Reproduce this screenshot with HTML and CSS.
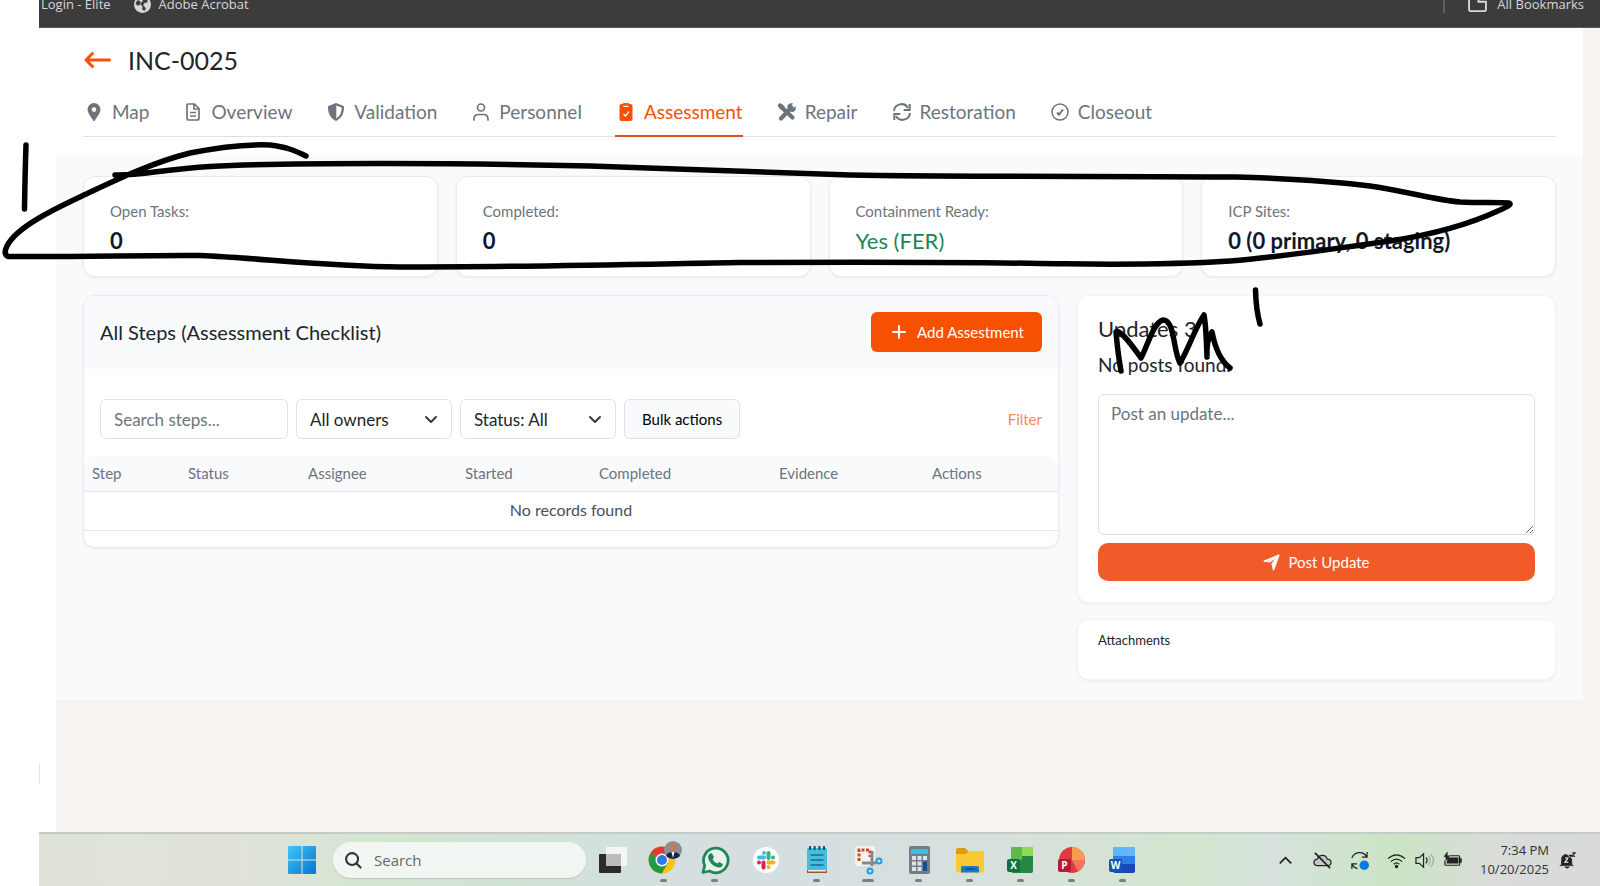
FILE: index.html
```html
<!DOCTYPE html>
<html lang="en">
<head>
<meta charset="utf-8">
<title>INC-0025 Assessment</title>
<link rel="stylesheet" href="styles.css">
</head>
<body>
<header class="bookmarks">
  <a class="bookmark" href="#">Login - Elite</a>
  <a class="bookmark" href="#">
    <svg class="globe" viewBox="0 0 16 16"><circle cx="8" cy="8" r="8" fill="#d5d7da"/><path d="M3 4c2 0 4 1 3 3s-1 2-3 2L1.500 7zM9 2c2 0 3 1 4 3-1 2-3 1-4 3s2 2 2 4-2 2-3 1 1-3-1-4 0-3 1-4z" fill="#3c3c3c"/></svg>
    Adobe Acrobat</a>
  <span class="bookmark-rule"></span>
  <a class="bookmark bookmark-all" href="#">
    <svg class="folder" viewBox="0 0 20 16" fill="none" stroke="#d5d7da" stroke-width="2"><path d="M1 1v12q0 2 2 2h14q2 0 2-2V5h-8V1z"/></svg>
    All Bookmarks</a>
</header>

<div class="workspace">
  <aside class="rail"><span class="rail-handle"></span></aside>
  <main class="page">
    <section class="masthead">
      <div class="title-row">
        <a class="back" href="#" aria-label="Back"><svg viewBox="0 0 28 18" fill="none" stroke="#f65103" stroke-width="3" stroke-linecap="round" stroke-linejoin="round"><path d="M26 9H3M9 2.500 2.500 9 9 15.500"/></svg></a>
        <h1>INC-0025</h1>
      </div>
      <nav class="tabs">
        <a class="tab" href="#"><svg viewBox="0 0 21 18"><path fill="currentColor" fill-rule="evenodd" d="M11 0a6.500 6.500 0 0 1 6.500 6.600C17.500 10 13.500 15 11.900 17.400q-.9 1.200-1.800 0C8.500 15 4.500 10 4.500 6.600A6.500 6.500 0 0 1 11 0zm0 4.300a2.300 2.300 0 1 0 0 4.600 2.300 2.300 0 0 0 0-4.600z"/></svg>Map</a>
        <a class="tab" href="#"><svg viewBox="0 0 21 18" fill="none" stroke="currentColor" stroke-width="1.700" stroke-linejoin="round"><path d="M6 1h6.500L17 5.500V15q0 2-2 2H7q-2 0-2-2V2q0-1 1-1zM12 1v5h5M8 9.500h6M8 13h6"/></svg>Overview</a>
        <a class="tab" href="#"><svg viewBox="0 0 21 18"><path fill="currentColor" fill-rule="evenodd" d="M11 0l7 2.700q1 .4 1 1.500C19 11 16 15.600 11 18 6 15.600 3 11 3 4.200q0-1.100 1-1.500zm.3 2.500v12.900c3.500-2 5.300-5.500 5.400-10.800z"/></svg>Validation</a>
        <a class="tab" href="#"><svg viewBox="0 0 21 18" fill="none" stroke="currentColor" stroke-width="1.700" stroke-linecap="round"><circle cx="11" cy="4.500" r="3.500"/><path d="M4 17v-1q0-4.500 4.500-4.500h5Q18 11.500 18 16v1"/></svg>Personnel</a>
        <a class="tab tab-active" href="#" aria-current="page"><svg viewBox="0 0 21 18"><rect x="4.500" y="1" width="13" height="17" rx="2" fill="currentColor"/><rect x="7.500" y="0" width="7" height="4" rx="1.500" fill="currentColor"/><path d="M8.500 3.300h5M8.500 11l2 2 3.500-4.500" fill="none" stroke="#fff" stroke-width="1.300"/></svg>Assessment</a>
        <a class="tab" href="#"><svg viewBox="0 0 21 18"><path d="M4 2.500l3.500 3.500 9 8.500M15.500 4.500 5 15.500" stroke="currentColor" stroke-width="4.200" stroke-linecap="round" fill="none"/><path d="M19.500 3.200l-3 2.500-2-2L17 .6c-3.500-1.200-6.500 1.500-5.500 5l4 3.400c3 .3 5.200-2.500 4-5.800zM2 3l3-2.500L8.500 3v3l-2 1.500L4 6z" fill="currentColor"/></svg>Repair</a>
        <a class="tab" href="#"><svg viewBox="0 0 21 18" fill="none" stroke="currentColor" stroke-width="2"><path d="M3 8a7.500 7.500 0 0 1 14-3M19 10a7.500 7.500 0 0 1-14 3"/><path d="M18.700 1v6h-6M3.300 17v-6h6"/></svg>Restoration</a>
        <a class="tab" href="#"><svg viewBox="0 0 21 18" fill="none" stroke="currentColor" stroke-width="1.500"><circle cx="11" cy="9" r="8"/><path d="M8 9.500l2 2.200L14 6.500" stroke-width="2"/></svg>Closeout</a>
      </nav>
    </section>

    <section class="content">
      <div class="stat"><span class="stat-label">Open Tasks:</span><strong class="stat-value">0</strong></div>
      <div class="stat"><span class="stat-label">Completed:</span><strong class="stat-value">0</strong></div>
      <div class="stat"><span class="stat-label">Containment Ready:</span><strong class="stat-value stat-ready">Yes (FER)</strong></div>
      <div class="stat"><span class="stat-label">ICP Sites:</span><strong class="stat-value">0 (0 primary, 0 staging)</strong></div>

      <section class="steps">
        <div class="steps-head">
          <h2>All Steps (Assessment Checklist)</h2>
          <button class="add" type="button"><svg viewBox="0 0 14 14" stroke="#fff" stroke-width="2" stroke-linecap="round"><path d="M7 1v12M1 7h12"/></svg>Add Assestment</button>
        </div>
        <form class="filters">
          <input class="field search" type="text" placeholder="Search steps..." aria-label="Search steps">
          <span class="picker"><select class="field" aria-label="Owner"><option>All owners</option></select><svg viewBox="0 0 12 8" fill="none" stroke="#343a40" stroke-width="2" stroke-linecap="round" stroke-linejoin="round"><path d="M1 1l5 5 5-5"/></svg></span>
          <span class="picker"><select class="field" aria-label="Status"><option>Status: All</option></select><svg viewBox="0 0 12 8" fill="none" stroke="#343a40" stroke-width="2" stroke-linecap="round" stroke-linejoin="round"><path d="M1 1l5 5 5-5"/></svg></span>
          <button class="bulk" type="button">Bulk actions</button>
          <a class="filter-link" href="#">Filter</a>
        </form>
        <table class="steps-table">
          <colgroup><col class="c-step"><col class="c-status"><col class="c-assignee"><col class="c-started"><col class="c-completed"><col class="c-evidence"><col></colgroup>
          <thead><tr><th>Step</th><th>Status</th><th>Assignee</th><th>Started</th><th>Completed</th><th>Evidence</th><th>Actions</th></tr></thead>
          <tbody><tr><td colspan="7">No records found</td></tr></tbody>
        </table>
      </section>

      <div class="side">
        <section class="updates">
          <h2>Updates 3</h2>
          <p class="no-posts">No posts found.</p>
          <textarea class="post-text" placeholder="Post an update..." aria-label="Post an update"></textarea>
          <button class="post" type="button"><svg viewBox="0 0 18 18"><path d="M1 6.800 16.500.600q1.200-.3.900.9L12 16.800q-.8 1.200-1.700.1L8.900 10.400 13 5 7.400 9 1 8.100q-1-.7 0-1.300z" fill="#fff"/></svg>Post Update</button>
        </section>
        <section class="attachments"><h3>Attachments</h3></section>
      </div>
    </section>
  </main>
</div>

<footer class="taskbar">
  <div class="apps">
    <button class="app start" type="button" aria-label="Start"><svg viewBox="0 0 27 27"><defs><linearGradient id="win" x1="0" y1="0" x2="1" y2="1" gradientUnits="objectBoundingBox"><stop offset="0" stop-color="#3fc6f7"/><stop offset="1" stop-color="#0874d1"/></linearGradient></defs><path d="M1 0h12v13H0V1q0-1 1-1zM14 0h12q1 0 1 1v12H14zM0 14h13v13H1q-1 0-1-1zM14 14h13v12q0 1-1 1H14z" fill="url(#win)"/></svg></button>
    <label class="search-box">
      <svg viewBox="0 0 18 18" fill="none" stroke="#333" stroke-width="2.200" stroke-linecap="round"><circle cx="7.500" cy="7.500" r="6.300"/><path d="M12.200 12.200l4.300 4.300"/></svg>
      <input type="text" placeholder="Search" aria-label="Search">
    </label>
    <button class="app" type="button" aria-label="Task view"><svg viewBox="0 0 28 28"><rect x="0" y="8" width="22" height="19" rx="1" fill="#2b2b2b"/><rect x="7" y="1" width="21" height="19" rx="1" fill="#f4f5f5"/><rect x="7" y="8" width="15" height="12" fill="#bcbcbc"/></svg></button>
    <button class="app running" type="button" aria-label="Chrome"><svg viewBox="0 0 28 28"><circle cx="12" cy="14" r="13.500" fill="#fbc116"/><path d="M12 14 .3 7.300A13.500 13.500 0 0 1 23.700 7.300z" fill="#e33b2e"/><path d="M12 14 .3 7.300A13.500 13.500 0 0 0 12 27.500L18 17z" fill="#229a48"/><path d="M12 8h11.700a13.500 13.500 0 0 1-11.700 19.500L18 17z" fill="#fbc116"/><circle cx="12" cy="14" r="6.500" fill="#fff"/><circle cx="12" cy="14" r="5" fill="#3376e8"/><circle cx="23" cy="4" r="9" fill="#8b9199"/><path d="M16 10q1-4 7-4t7 4q-3 3-7 3t-7-3z" fill="#172441"/><circle cx="23" cy="1" r="4.200" fill="#b97e64"/><path d="M21.500 6h3L23 12z" fill="#fff"/></svg></button>
    <button class="app running" type="button" aria-label="WhatsApp"><svg viewBox="0 0 28 28"><path d="M2 26.500l1.700-6.800A12.300 12.300 0 1 1 8.500 25z" fill="#eaf2ec" stroke="#21875b" stroke-width="2.800" stroke-linejoin="round"/><path d="M9 7.500l2-.3 2 4-1.400 2q1.500 3 4.700 4.400l1.900-1.700 3.600 2q.1 3-3.500 3.600C13 21.500 7 16 7 10.600Q7.300 8.500 9 7.500z" fill="#21875b"/></svg></button>
    <button class="app" type="button" aria-label="Slack"><svg viewBox="0 0 28 28" stroke-width="4" stroke-linecap="round"><circle cx="14" cy="14" r="13" fill="#fff"/><path d="M7 11.500h5M12 7v0" stroke="#38bfe8"/><path d="M16.500 7v5M21 11.500v0" stroke="#31b57c"/><path d="M16.500 16.500h5M16.500 21v0" stroke="#e8b02d"/><path d="M11.500 16.500v5M7 16.500v0" stroke="#dc1e5b"/></svg></button>
    <button class="app running" type="button" aria-label="Notepad"><svg viewBox="0 0 28 28"><rect x="4" y="2" width="20" height="22" rx="1.500" fill="#43bfdc"/><path d="M4 24h20v3H4z" fill="#a15323"/><path d="M5 24h18v1.500H5z" fill="#f1f1f1"/><path d="M7 0v4M11.700 0v4M16.400 0v4M21 0v4" stroke="#19536c" stroke-width="2"/><path d="M7.500 9h13M7.500 14h13M7.500 19h13" stroke="#176c91" stroke-width="1.500"/></svg></button>
    <button class="app running wide" type="button" aria-label="Snipping Tool"><svg viewBox="0 0 28 28" fill="none"><rect x="1" y="0" width="20" height="20" rx="2" fill="#f5f2ef"/><path d="M5 15V4h11v7" stroke="#cf4a20" stroke-width="3" stroke-dasharray="3 1.500"/><path d="M18 5v15M8 17h14" stroke="#85898d" stroke-width="3"/><circle cx="25" cy="15" r="2.500" stroke="#269cdd" stroke-width="2"/><circle cx="16" cy="25" r="2.500" stroke="#269cdd" stroke-width="2"/></svg></button>
    <button class="app running" type="button" aria-label="Calculator"><svg viewBox="0 0 28 28"><rect x="4" y="0" width="21" height="28" rx="2" fill="#737d86"/><rect x="6" y="3" width="17" height="5" fill="#38bde8"/><path d="M7 10h4v4H7zM12.500 10h4v4h-4zM18 10h4v4h-4zM7 15.500h4v4H7zM12.500 15.500h4v4h-4zM7 21h4v4H7zM12.500 21h4v4h-4z" fill="#dfe3e6"/><path d="M18 15.500h4V25h-4z" fill="#114f91"/></svg></button>
    <button class="app running" type="button" aria-label="File Explorer"><svg viewBox="0 0 28 28"><path d="M0 4q0-2 2-2h7l3 3h14v8H0z" fill="#dc9c12"/><path d="M0 8h10l3-3h15v20q0 1.500-1.500 1.500h-25Q0 26.500 0 25z" fill="#fcc935"/><path d="M5 26.500V22q0-2 2-2h14q2 0 2 2v4.500z" fill="#1978c9"/><path d="M9 23h10" stroke="#0a4f91" stroke-width="1.500"/></svg></button>
    <button class="app running" type="button" aria-label="Excel"><svg viewBox="0 0 28 28"><rect x="4" y="1" width="22" height="26" rx="2" fill="#258842"/><path d="M6 1h9v13H4V3q0-2 2-2z" fill="#5bba48"/><path d="M15 1h9q2 0 2 2v7H15z" fill="#90db51"/><rect x="0" y="13" width="13" height="13" rx="2" fill="#10713c"/><text class="badge" x="6.500" y="23">X</text></svg></button>
    <button class="app running" type="button" aria-label="PowerPoint"><svg viewBox="0 0 28 28"><circle cx="14" cy="14" r="13" fill="#db3e3c"/><path d="M14 1a13 13 0 0 1 13 13H14z" fill="#fb9b50"/><path d="M14 14h13a13 13 0 0 1-7 11.500z" fill="#f27562"/><rect x="0" y="13" width="13" height="13" rx="2" fill="#bb1831"/><text class="badge" x="6.500" y="23">P</text></svg></button>
    <button class="app running" type="button" aria-label="Word"><svg viewBox="0 0 28 28"><rect x="4" y="1" width="22" height="26" rx="2" fill="#1648b9"/><path d="M4 10h22v8H4z" fill="#2c80e5"/><path d="M6 1h18q2 0 2 2v7H4V3q0-2 2-2z" fill="#61b7fa"/><rect x="0" y="13" width="13" height="13" rx="2" fill="#1254b7"/><text class="badge" x="6.500" y="23">W</text></svg></button>
  </div>
  <div class="tray">
    <svg class="tray-icon" viewBox="0 0 20 20"><path d="M4 13l6-6 6 6" stroke-width="1.800"/></svg>
    <svg class="tray-icon" viewBox="0 0 20 20"><path d="M5 15.500q-4-.5-4-3.500 0-3 3.500-3.500Q6 4.500 10 4.500t5 4q4 .3 4 3.500t-4 3.500z" fill="#c6c6c6"/><path d="M2 2l16 16" stroke-width="1.800"/></svg>
    <svg class="tray-icon" viewBox="0 0 20 20"><path d="M2 7.500A8.500 8.500 0 0 1 17.500 6M18 1v5.500h-5.500M2 19v-5.500h5.500M2 13.500q1.500 4 6 5"/><circle cx="15" cy="15" r="5" fill="#0b7bdb" stroke="none"/></svg>
    <span class="status-group">
      <svg class="tray-icon" viewBox="0 0 20 20"><path d="M1 8q9-8 18 0M4 11.200q6-5.500 12 0M7 14q3-2.800 6 0"/><circle cx="10" cy="16.200" r="1.200" fill="#222"/></svg>
      <svg class="tray-icon" viewBox="0 0 20 20"><path d="M1 7v6h3.500L9 17V3L4.500 7zM11.500 7q2.500 3 0 6"/><path d="M14 5q4 5 0 10M16.500 3q6 7 0 14" stroke="#a6aaa5"/></svg>
      <svg class="tray-icon" viewBox="0 0 20 20"><path d="M7 5h9.500q1 0 1 1v8q0 1-1 1H3q-1 0-1-1v-4"/><path d="M5 7h11v6H4zM18 8h1.500v4H18zM4.500 1v4H7L3 10V6H1z" fill="#222" stroke-width=".5"/></svg>
    </span>
    <time class="clock"><span>7:34 PM</span><span>10/20/2025</span></time>
    <svg class="tray-icon bell" viewBox="0 0 20 20"><path d="M3 15V9q0-6 6-6l6 6v6l2 1H1zM7 17.500h5q-2.500 3-5 0z" fill="#222" stroke-width=".8"/><path d="M7 7h4l-4 5h4" stroke="#fff" stroke-width="1.300"/><path d="M11.500 4h3.500l-3.500 4h3.500M15.500 1H19l-3.500 4H19" stroke-width="1.300"/></svg>
  </div>
</footer>

<svg class="ink" viewBox="0 0 1600 886" preserveAspectRatio="none" stroke-width="5.500" aria-hidden="true">
  <path d="M26 145Q25 175 24.500 209"/>
  <path d="M115 175C138 176 165 169 210 166.500C300 162 460 163 590 166C690 169 740 172 850 175C960 177 1130 176 1235 177C1290 178.500 1330 181 1370 186C1410 192 1435 200 1460 202C1480 203 1500 202 1509 203C1512 204 1509 206 1500 210C1470 224 1430 235 1390 241C1330 249 1290 256 1230 261C1150 266 1090 264 1040 263.500C960 262 850 262 740 262.500C650 264 530 267 400 267C320 266 260 258 200 255.500C140 255 90 257 8 256.500Q3 254 7 246C16 228 50 211 82 196C110 183 150 163 190 153C215 148 245 144 270 145C286 147 294 150 306 156"/>
  <path d="M1121 371Q1118 355 1116 332Q1120 328 1141 358C1148 345 1153 323 1163 320C1175 320 1173 351 1180 363C1188 350 1196 326 1204 315Q1206 325 1207 357Q1206 340 1212 332Q1217 358 1230 368"/>
  <path d="M1255.500 290Q1256 310 1260 324"/>
</svg>
</body>
</html>
```
FILE: styles.css
```css
* { box-sizing: border-box; }

body {
  margin: 0;
  min-height: 100vh;
  display: flex;
  flex-direction: column;
  position: relative;
  background: #fff;
  color: #212529;
  font-family: Lato, "Open Sans", sans-serif;
  font-size: 16px;
}

a { color: inherit; text-decoration: none; }
h1, h2, h3, p { margin: 0; font-weight: 400; }
button, input, select, textarea { font: inherit; color: inherit; }
svg { flex: none; overflow: visible; }

/* Browser bookmarks strip */
.bookmarks {
  display: flex;
  align-items: flex-start;
  gap: 23px;
  height: 28px;
  margin-left: 39px;
  padding: 0 16px 0 2px;
  overflow: hidden;
  background: #3c3c3c;
  border-bottom: 1px solid #5a5a5a;
  color: #d5d7da;
  font-family: "Open Sans", sans-serif;
  font-size: 13px;
  line-height: 8px;
}
.bookmark { display: flex; align-items: center; gap: 8px; height: 8px; }
.globe { width: 17px; height: 17px; }
.folder { width: 19px; height: 15px; }
.bookmark-rule { width: 2px; height: 13px; margin-left: auto; background: #5f5f5f; }
.bookmark-all { gap: 10px; }

.workspace { flex: 1; display: flex; background: #f7f3f0; }
.rail { width: 56px; display: flex; flex-direction: column; justify-content: flex-end; padding: 0 0 48px 39px; background: #fff; }
.rail-handle { width: 1px; height: 21px; background: #e6e6e6; }
.page { flex: 1; margin-right: 17px; }

/* Title and tabs */
.masthead { padding: 16px 27px 18px; background: #fff; }
.title-row { display: flex; align-items: center; gap: 16px; height: 32px; }
.back { display: flex; }
.back svg { width: 29px; height: 18px; }
h1 { font-size: 25px; line-height: 32px; }
.tabs { display: flex; gap: 33px; margin-top: 16px; border-bottom: 1px solid #dee2e6; color: #6c757d; font-size: 19px; }
.tab { display: flex; align-items: center; gap: 8px; height: 45px; padding-bottom: 4px; margin-bottom: -1px; border-bottom: 2px solid transparent; }
.tab svg { width: 21px; height: 18px; }
.tab-active { color: #f65103; border-color: #d9531e; }

/* Card grid */
.content {
  display: grid;
  grid-template-columns: repeat(12, minmax(0, 1fr));
  gap: 18px;
  align-items: start;
  padding: 21px 27px 20px;
  background: #f8fafc;
}
.stat, .steps, .updates, .attachments {
  background: #fff;
  border: 1px solid #e9ebee;
  border-radius: 12px;
  box-shadow: 0 1px 3px rgba(0, 0, 0, .06);
}
.stat { grid-column: span 3; display: flex; flex-direction: column; gap: 5px; padding: 24px 26px 20px; }
.stat-label { color: #6c757d; font-size: 15px; line-height: 20px; }
.stat-value { font-size: 22px; font-weight: 700; line-height: 30px; color: #111827; }
.stat-ready { color: #198754; font-weight: 400; }

.steps { grid-column: span 8; padding-bottom: 16px; overflow: hidden; }
.steps-head { display: flex; align-items: center; justify-content: space-between; padding: 16px 16px 17px; background: #f8fafc; }
h2 { font-size: 20px; line-height: 28px; }
.add { display: flex; align-items: center; justify-content: center; gap: 11px; height: 40px; padding: 0 18px 0 21px; border: 0; border-radius: 6px; background: #f65103; color: #fff; font-size: 15px; }
.add svg { width: 14px; height: 14px; }
.filters { display: flex; align-items: center; gap: 8px; padding: 30px 16px 17px; }
.field { width: 100%; height: 40px; padding: 0 13px; border: 1px solid #dee2e6; border-radius: 6px; background: #fff; font-size: 17px; appearance: none; }
.field::placeholder, .post-text::placeholder { color: #6c757d; opacity: 1; }
.search { width: 188px; }
.picker { position: relative; width: 156px; }
.picker svg { position: absolute; right: 15px; top: 17px; width: 12px; height: 8px; pointer-events: none; }
.bulk { height: 40px; padding: 0 17px; border: 1px solid #dee2e6; border-radius: 6px; background: #f8fafc; color: #000; font-size: 15px; }
.filter-link { margin-left: auto; color: #fa8a58; font-size: 15px; }

.steps-table { width: 100%; table-layout: fixed; border-collapse: separate; border-spacing: 0; }
.c-step { width: 96px; }
.c-status { width: 120px; }
.c-assignee { width: 157px; }
.c-started { width: 134px; }
.c-completed { width: 180px; }
.c-evidence { width: 153px; }
th { height: 36px; padding: 0 8px 2px; border-bottom: 1px solid #e5e7eb; background: #f8fafc; color: #6c757d; font-size: 15px; font-weight: 400; text-align: left; }
th:first-child { border-top-left-radius: 12px; }
th:last-child { border-top-right-radius: 12px; }
td { height: 39px; padding: 0 0 3px; border-bottom: 1px solid #e5e7eb; color: #495057; font-size: 16px; text-align: center; }

/* Right column */
.side { grid-column: span 4; display: flex; flex-direction: column; gap: 16px; }
.updates, .attachments { border-color: #f3f5f7; }
.updates { display: flex; flex-direction: column; padding: 17px 20px 21px; }
.updates h2 { font-size: 22px; line-height: 32px; }
.no-posts { margin: 6px 0 15px; font-size: 19px; line-height: 28px; }
.post-text { display: block; width: 100%; height: 141px; margin-bottom: 8px; padding: 7px 12px; border: 1px solid #dee2e6; border-radius: 6px; background: #fff; font-size: 17px; line-height: 24px; resize: vertical; }
.post { display: flex; align-items: center; justify-content: center; gap: 8px; height: 38px; border: 0; border-radius: 10px; background: #f15a29; color: #fff; font-size: 15px; }
.post svg { width: 17px; height: 17px; }
.attachments { height: 61px; padding: 10px 20px; }
h3 { font-size: 13px; line-height: 20px; }

/* Desktop taskbar */
.taskbar {
  display: flex;
  align-items: center;
  height: 54px;
  margin-left: 39px;
  padding: 0 24px 0 249px;
  border-top: 2px solid #c4cac4;
  background: linear-gradient(90deg, #dfe3d6, #e0e2da 12%, #d4e5d2 21%, #d1e3d5 30%, #d5dfe0 42%, #d6e0df 58%, #d5e5cf 74%, #d6e2dc 79%, #cbe5c4 87%, #d9dcd9 93%, #d9d9dc);
  font-family: "Open Sans", sans-serif;
}
.apps { display: flex; align-items: center; gap: 23px; }
.app { position: relative; width: 28px; height: 28px; padding: 0; border: 0; background: none; }
.app svg { display: block; width: 28px; height: 28px; }
.start { margin-right: -6px; }
.running::after { content: ""; position: absolute; left: 50%; bottom: -8px; width: 7px; height: 3px; margin-left: -4px; border-radius: 2px; background: #7c7f80; }
.wide::after { width: 12px; margin-left: -6px; }
.badge { fill: #fff; font-size: 10px; font-weight: 700; text-anchor: middle; }
.search-box { display: flex; align-items: center; gap: 12px; width: 253px; height: 36px; margin-right: -10px; padding: 0 12px; border-radius: 18px; background: #f2f6f2; box-shadow: 0 1px 1px #bcc5bc; }
.search-box svg { width: 17px; height: 17px; }
.search-box input { width: 180px; padding: 0; border: 0; outline: 0; background: none; font-size: 15px; }
.search-box input::placeholder { color: #666; opacity: 1; }
.tray { display: flex; align-items: center; gap: 18px; margin-left: auto; }
.tray-icon { width: 19px; height: 19px; fill: none; stroke: #222; stroke-width: 1.3px; }
.status-group { display: flex; gap: 9px; }
.clock { display: flex; flex-direction: column; align-items: flex-end; color: #333; font-size: 13px; line-height: 19px; }
.bell { width: 17px; height: 17px; margin-left: -8px; }

/* Freehand annotation over the page */
.ink { position: absolute; left: 0; top: 0; width: 100%; height: 100%; fill: none; stroke: #000; stroke-linecap: round; stroke-linejoin: round; pointer-events: none; }
```
